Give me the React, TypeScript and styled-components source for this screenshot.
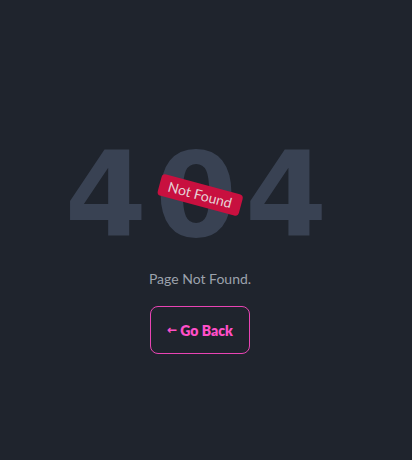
import React from "react";
import styled, { createGlobalStyle } from "styled-components";

const Global = createGlobalStyle`
  html, body { margin: 0; padding: 0; background: #1f242d; }
  body { font-family: Lato, "Noto Sans", sans-serif; }
`;

const Main = styled.main`
  box-sizing: border-box;
  min-height: 460px;
  width: 412px;
  padding: 136px 12px 0 0;
  display: flex;
  flex-direction: column;
  align-items: center;
  background: #1f242d;
`;

const CodeWrap = styled.div`
  position: relative;
  display: flex;
  justify-content: center;
`;

const Code = styled.h1`
  margin: 0;
  font-family: "DejaVu Sans", sans-serif;
  font-size: 118px;
  line-height: 1;
  font-weight: 700;
  letter-spacing: 8px;
  color: #394253;
`;

const Badge = styled.div`
  position: absolute;
  left: 50%;
  top: 50%;
  transform: translate(-50%, -50%) rotate(15deg);
  background: #c8103f;
  color: #e6d3d8;
  font-family: Lato, sans-serif;
  font-size: 14px;
  line-height: 22px;
  padding: 0 9px;
  border-radius: 4px;
  white-space: nowrap;
`;

const Message = styled.p`
  margin: 15px 0 0;
  font-family: Lato, sans-serif;
  font-size: 14px;
  line-height: 20px;
  color: #9ca2ac;
`;

const BackButton = styled.a`
  box-sizing: border-box;
  margin-top: 17px;
  width: 100px;
  height: 48px;
  display: flex;
  align-items: center;
  justify-content: center;
  gap: 3px;
  border: 1px solid #e944b4;
  border-radius: 8px;
  color: #ff4fc8;
  font-family: Lato, sans-serif;
  font-weight: 800;
  font-size: 14px;
  text-decoration: none;
  cursor: pointer;
`;

const Arrow = styled.span`
  font-family: "DejaVu Sans", sans-serif;
  font-weight: 700;
  font-size: 12px;
`;

export default function App() {
  return (
    <>
      <Global />
      <Main>
        <CodeWrap>
          <Code>404</Code>
          <Badge>Not Found</Badge>
        </CodeWrap>
        <Message>Page Not Found.</Message>
        <BackButton>
          <Arrow>←</Arrow>
          <span>Go Back</span>
        </BackButton>
      </Main>
    </>
  );
}
